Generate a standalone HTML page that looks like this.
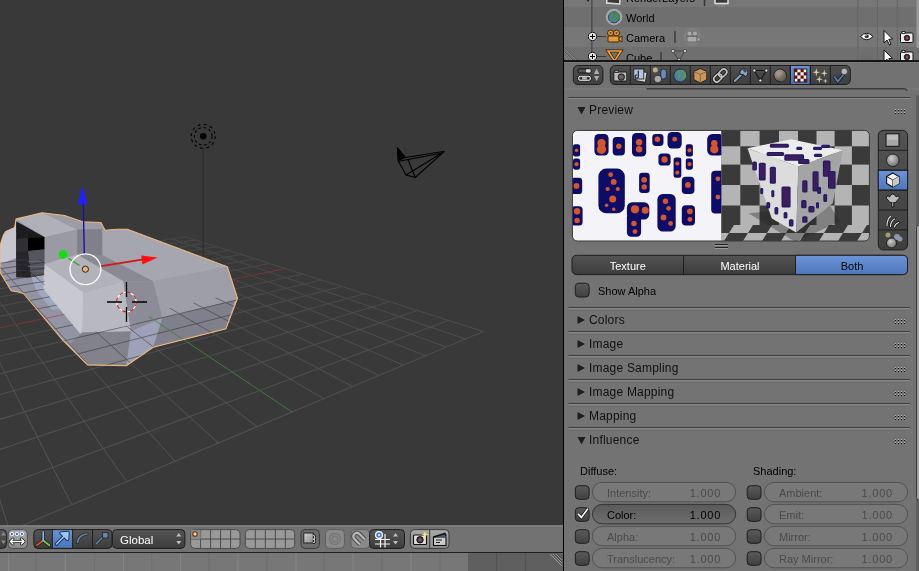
<!DOCTYPE html>
<html><head><meta charset="utf-8">
<style>
*{margin:0;padding:0;box-sizing:border-box}
html,body{width:919px;height:571px;overflow:hidden;background:#393939;font-family:"Liberation Sans",sans-serif;font-size:11px;color:#000}
.abs{position:absolute}
.txt{font-size:11px;line-height:14px;color:#000;white-space:nowrap;will-change:transform}
#vp{left:0;top:0;width:563px;height:525px;background:#393939}
#vhdr{left:0;top:525px;width:563px;height:27px;background:#727272;border-top:1px solid #5a5a5a}

#div{left:563px;top:0;width:1px;height:571px;background:#000}
#outl{left:564px;top:0;width:355px;height:61px;background:#727272}
#phdr{left:564px;top:61px;width:355px;height:28px;background:#727272;border-top:1px solid #000}
#props{left:564px;top:89px;width:355px;height:482px;background:#737373}
</style></head><body>
<div id="vp" class="abs">
<svg width="563" height="525" style="position:absolute;left:0;top:0">
<defs><linearGradient id="gridg" gradientUnits="userSpaceOnUse" x1="0" y1="235" x2="0" y2="420"><stop offset="0" stop-color="#464646"/><stop offset="1" stop-color="#535353"/></linearGradient></defs><path d="M-122.5,280.6L-145.2,596.0M-122.5,280.6L186.1,236.9M-96.3,276.9L-62.1,561.0M-122.9,286.9L195.7,240.0M-71.3,273.3L9.5,530.9M-123.4,293.7L205.9,243.2M-47.4,270.0L71.8,504.7M-124.0,301.3L216.9,246.7M-24.7,266.7L126.6,481.6M-124.6,309.7L228.6,250.5M-2.9,263.7L175.0,461.2M-125.2,319.0L241.2,254.5M18.0,260.7L218.3,443.0M-126.0,329.4L254.8,258.8M37.9,257.9L257.0,426.7M-126.8,341.1L269.4,263.5M75.5,252.6L323.7,398.7M-128.9,369.5L302.5,274.0M93.2,250.1L352.6,386.5M-130.1,386.9L321.3,280.0M110.1,247.7L379.0,375.4M-131.6,407.3L341.9,286.5M126.5,245.4L403.3,365.2M-133.3,431.4L364.6,293.7M142.2,243.1L425.7,355.8M-135.4,460.2L389.6,301.7M157.4,241.0L446.3,347.1M-138.0,495.4L417.4,310.5M172.0,238.9L465.5,339.0M-141.1,539.4L448.4,320.4M186.1,236.9L483.3,331.5M-145.2,596.0L483.3,331.5" stroke="url(#gridg)" stroke-width="1" fill="none"/>
<g stroke-width="1" fill="none"><path d="M-127.8,354.3L285.3,268.5" stroke="#7a3434"/><path d="M57.1,255.2L292.0,412.0" stroke="#3c7c3c"/></g>
<line x1="203.2" y1="148" x2="203.2" y2="256" stroke="#2a2a2a" stroke-width="1"/><circle cx="203.2" cy="136.3" r="3.2" fill="#000"/><circle cx="203.2" cy="136.3" r="8.8" fill="none" stroke="#000" stroke-width="1.1" stroke-dasharray="2.6 2.6"/><circle cx="203.2" cy="136.3" r="12" fill="none" stroke="#000" stroke-width="1.1" stroke-dasharray="3 3.3"/>
<g stroke="#000" stroke-width="1.1" fill="none" stroke-linejoin="round">
<polygon points="397.3,147.3 398,160.5 405.5,157.5" fill="#000" stroke-width="1"/>
<path d="M404,157.8 L444.6,151.2 M399,161.2 L443.5,152.8 M398,160.5 L406,175 L415.2,177.5 L444.6,151.2 M408.2,160 L415.2,177.5 M406,175 L442,153"/>
</g>
<g><polygon points="0.0,245.6 3.5,235.1 5.6,231.6 14.7,227.4 16.1,219.0 42.0,212.7 64.5,215.5 82.7,221.8 100.9,222.5 105.1,230.2 117.5,229.2 127.4,229.2 227.4,266.8 237.5,298.2 225.9,328.9 153.2,347.3 126.4,365.8 87.6,364.9 62.5,340.0 23.8,293.7 19.4,292.2 11.2,290.7 0.0,272.1" fill="#9a9aa6" />
<polygon points="0.0,262.0 16.4,258.0 16.4,277.0 44.5,276.0 43.2,289.2 80.4,334.0 82.0,332.5 70.0,343.6 62.5,340.0 23.8,293.7 19.4,292.2 11.2,290.7 0.0,272.1" fill="#9294a4" />
<polygon points="31.0,276.0 44.5,276.0 43.2,289.2 60.0,309.0 52.0,310.0 36.0,290.0" fill="#a2a8c0" />
<polygon points="0.0,245.6 3.5,235.1 5.6,231.6 14.7,227.4 16.1,219.0 16.4,258.0 0.0,264.0" fill="#c6c6ce" />
<polygon points="16.1,219.0 42.0,212.7 47.4,215.0 77.2,229.4 44.5,237.2" fill="#b0b0b8" />
<polygon points="42.0,212.7 64.5,215.5 82.7,221.8 100.9,222.5 102.5,229.0 77.2,229.4 47.4,215.0" fill="#9c9ca6" />
<polygon points="16.1,221.2 44.9,237.2 44.9,274.5 31.0,277.3 16.4,277.3" fill="#1c1c1f" />
<polygon points="28.0,238.0 44.9,237.2 44.9,249.3 28.0,251.0" fill="#000" />
<polygon points="16.4,239.0 28.0,238.0 28.0,252.0 16.4,252.0" fill="#303034" />
<polygon points="16.4,252.0 28.0,251.0 31.0,277.3 16.4,277.3" fill="#26262a" />
<polygon points="28.0,251.0 44.9,249.3 44.9,274.5 31.0,277.3" fill="#55555d" />
<path d="M28,261.5H44.9M28,266.5H44.9M29,271H44.9" stroke="#6a6a72" stroke-width="0.8"/>
<path d="M16.4,260H28M16.4,265H28.5M16.4,270.5H30" stroke="#3c3c42" stroke-width="0.8"/>
<polygon points="44.5,237.2 77.2,229.4 77.2,254.5 44.5,264.0" fill="#9a9aa4" />
<polygon points="77.2,229.4 102.5,229.0 102.5,255.2 77.2,254.5" fill="#80808c" />
<polygon points="102.5,229.0 105.1,230.2 117.5,229.2 127.4,229.2 227.4,266.8 153.2,281.3 102.5,255.2" fill="#a6a6b0" />
<polygon points="77.2,254.5 102.5,255.2 153.2,281.3 123.4,281.3" fill="#8a8a94" />
<polygon points="44.5,264.0 77.2,254.5 123.4,281.3 83.4,292.2" fill="#b2b2ba" />
<polygon points="44.5,264.0 83.4,292.2 83.4,330.0 80.4,334.0 43.2,289.2" fill="#c8c8d0" />
<polygon points="83.4,292.2 123.4,281.3 131.0,331.6 82.0,332.5" fill="#b8b8c0" />
<polygon points="123.4,281.3 153.2,281.3 162.5,317.7 131.0,331.6" fill="#8c8c98" />
<polygon points="153.2,281.3 227.4,266.8 237.5,298.2 234.6,300.2 162.5,317.7" fill="#9e9ea8" />
<polygon points="82.0,332.5 131.0,331.6 126.4,365.8 87.6,364.9 70.0,343.6" fill="#82828c" />
<polygon points="131.0,331.6 162.5,317.7 153.2,347.3 126.4,365.8" fill="#9ea2b8" />
<polygon points="162.5,317.7 234.6,300.2 225.9,328.9 153.2,347.3" fill="#80808c" /></g>
<clipPath id="mc"><polygon points="0.0,245.6 3.5,235.1 5.6,231.6 14.7,227.4 16.1,219.0 42.0,212.7 64.5,215.5 82.7,221.8 100.9,222.5 105.1,230.2 117.5,229.2 127.4,229.2 227.4,266.8 237.5,298.2 225.9,328.9 153.2,347.3 126.4,365.8 87.6,364.9 62.5,340.0 23.8,293.7 19.4,292.2 11.2,290.7 0.0,272.1"/></clipPath><clipPath id="fc"><polygon points="0.0,258.0 16.4,258.0 16.4,262.0 44.5,258.0 44.5,290.0 80.4,334.0 131.0,325.0 162.5,310.0 240.0,292.0 260.0,292.0 260.0,400.0 0.0,400.0"/></clipPath>
<g clip-path="url(#mc)"><g clip-path="url(#fc)" opacity="0.45"><path d="M-122.5,280.6L-145.2,596.0M-122.5,280.6L186.1,236.9M-96.3,276.9L-62.1,561.0M-122.9,286.9L195.7,240.0M-71.3,273.3L9.5,530.9M-123.4,293.7L205.9,243.2M-47.4,270.0L71.8,504.7M-124.0,301.3L216.9,246.7M-24.7,266.7L126.6,481.6M-124.6,309.7L228.6,250.5M-2.9,263.7L175.0,461.2M-125.2,319.0L241.2,254.5M18.0,260.7L218.3,443.0M-126.0,329.4L254.8,258.8M37.9,257.9L257.0,426.7M-126.8,341.1L269.4,263.5M75.5,252.6L323.7,398.7M-128.9,369.5L302.5,274.0M93.2,250.1L352.6,386.5M-130.1,386.9L321.3,280.0M110.1,247.7L379.0,375.4M-131.6,407.3L341.9,286.5M126.5,245.4L403.3,365.2M-133.3,431.4L364.6,293.7M142.2,243.1L425.7,355.8M-135.4,460.2L389.6,301.7M157.4,241.0L446.3,347.1M-138.0,495.4L417.4,310.5M172.0,238.9L465.5,339.0M-141.1,539.4L448.4,320.4M186.1,236.9L483.3,331.5M-145.2,596.0L483.3,331.5" stroke="#202020" stroke-width="1" fill="none"/><path d="M-127.8,354.3L285.3,268.5" stroke="#b02020" stroke-width="1.2"/><path d="M57.1,255.2L292.0,412.0" stroke="#208020" stroke-width="1.2"/></g></g>
<polygon points="0.0,245.6 3.5,235.1 5.6,231.6 14.7,227.4 16.1,219.0 42.0,212.7 64.5,215.5 82.7,221.8 100.9,222.5 105.1,230.2 117.5,229.2 127.4,229.2 227.4,266.8 237.5,298.2 225.9,328.9 153.2,347.3 126.4,365.8 87.6,364.9 62.5,340.0 23.8,293.7 19.4,292.2 11.2,290.7 0.0,272.1" fill="none" stroke="#f2b878" stroke-width="1.1"/>

<line x1="83.3" y1="203" x2="84.3" y2="254" stroke="#1414a8" stroke-width="1.4"/>
<polygon points="82.4,185.3 77.8,204.5 87.4,204.5" fill="#2020ff"/>
<line x1="99.8" y1="266.4" x2="142" y2="259.7" stroke="#d01818" stroke-width="1.7"/>
<polygon points="157.6,257.4 141.3,255.6 142.3,264.4" fill="#ff1010"/>
<line x1="68.3" y1="258.2" x2="79.5" y2="265.6" stroke="#30a030" stroke-width="1.2"/>
<circle cx="63.1" cy="254.5" r="4.4" fill="#10e010"/>
<circle cx="85.4" cy="269.2" r="15.4" fill="none" stroke="#fff" stroke-width="1.3"/>
<circle cx="85.4" cy="269.2" r="3.1" fill="#f0b070" stroke="#2a2a2a" stroke-width="1"/>


<circle cx="126.5" cy="302" r="9.8" fill="none" stroke="#fff" stroke-width="1.2"/>
<circle cx="126.5" cy="302" r="9.8" fill="none" stroke="#d02020" stroke-width="1.2" stroke-dasharray="4.1 3.6"/>
<path d="M107,302H122M132,302H147M126.5,282V297M126.5,307V322" stroke="#000" stroke-width="1.3"/>

</svg>
</div>

<div class="abs" style="left:0;top:525px;width:563px;height:27px;background:#727272;border-top:2px solid #7c7c7c"></div>
<div class="abs" style="left:0;top:552px;width:563px;height:1px;background:#1e1e1e"></div>
<svg class="abs" style="left:0;top:525px" width="563" height="27">
<defs>
<linearGradient id="gd" x1="0" y1="0" x2="0" y2="1"><stop offset="0" stop-color="#555"/><stop offset="1" stop-color="#3c3c3c"/></linearGradient>
<linearGradient id="gl" x1="0" y1="0" x2="0" y2="1"><stop offset="0" stop-color="#a8a8a8"/><stop offset="1" stop-color="#8e8e8e"/></linearGradient>
<linearGradient id="gb" x1="0" y1="0" x2="0" y2="1"><stop offset="0" stop-color="#6a94d6"/><stop offset="1" stop-color="#4a74b6"/></linearGradient>
</defs>
<!-- partial arrows button -->
<rect x="-6" y="4.6" width="12.5" height="18.8" rx="4" fill="url(#gd)" stroke="#262626"/>
<path d="M1,10.5 L3.5,7 L6,10.5Z M1,15.5 L3.5,19 L6,15.5Z" fill="#8a8a8a"/>
<!-- manipulator toggle -->
<rect x="8.1" y="4.6" width="19.2" height="18.8" rx="4" fill="url(#gl)" stroke="#4a4a4a"/>
<g fill="#4a70c0" stroke="#fff" stroke-width="0.9"><circle cx="11.9" cy="9" r="1.7"/><circle cx="16.9" cy="9" r="1.7"/><circle cx="21.9" cy="9" r="1.7"/></g>
<path d="M10.5,16.5 H24 M13,14 L10.5,16.5 L13,19 M21.5,14 L24,16.5 L21.5,19" stroke="#1a1a1a" stroke-width="3" fill="none" stroke-linecap="round" stroke-linejoin="round"/>
<path d="M10.5,16.5 H24 M13,14 L10.5,16.5 L13,19 M21.5,14 L24,16.5 L21.5,19" stroke="#fff" stroke-width="1.4" fill="none" stroke-linecap="round" stroke-linejoin="round"/>
<!-- transform group -->
<rect x="33.8" y="4.6" width="78.2" height="18.8" rx="4" fill="url(#gd)" stroke="#1e1e1e"/>
<rect x="52.3" y="4.6" width="20.3" height="18.8" fill="url(#gb)" stroke="#1e1e1e"/>
<path d="M92.6,4.6V23.4" stroke="#1e1e1e"/>
<!-- axes icon -->
<path d="M43.2,15.5 L36.9,20.3" stroke="#1a1a1a" stroke-width="3.2" stroke-linecap="round"/>
<path d="M43.2,15.5 L49.4,20.3" stroke="#1a1a1a" stroke-width="3.2" stroke-linecap="round"/>
<path d="M43.2,15.5 V7" stroke="#1a1a1a" stroke-width="3.2" stroke-linecap="round"/>
<path d="M43.2,15.5 L36.9,20.3" stroke="#e05030" stroke-width="1.8" stroke-linecap="round"/>
<path d="M43.2,15.5 L49.4,20.3" stroke="#70d040" stroke-width="1.8" stroke-linecap="round"/>
<path d="M43.2,15.5 V7" stroke="#80b0f0" stroke-width="1.8" stroke-linecap="round"/>
<!-- translate arrow -->
<path d="M56.5,19 L64,11.5 M61,8 L68,7.5 L67.5,14.5Z" stroke="#17305a" stroke-width="3.4" fill="#17305a" stroke-linecap="round" stroke-linejoin="round"/>
<path d="M56.5,19 L64,11.5 M61,8 L68,7.5 L67.5,14.5Z" stroke="#9cc4f4" stroke-width="1.6" fill="#9cc4f4" stroke-linecap="round" stroke-linejoin="round"/>
<!-- rotate arc -->
<path d="M77.5,17.5 Q78.5,10 87,9" stroke="#222" stroke-width="3" fill="none" stroke-linecap="round"/>
<path d="M77.5,17.5 Q78.5,10 87,9" stroke="#6a86b0" stroke-width="1.6" fill="none" stroke-linecap="round"/>
<!-- scale -->
<path d="M96,19 L104,11" stroke="#222" stroke-width="3" stroke-linecap="round"/>
<path d="M96,19 L104,11" stroke="#6a86b0" stroke-width="1.6" stroke-linecap="round"/>
<rect x="102.5" y="7.5" width="5.5" height="5.5" fill="#6a86b0" stroke="#222" stroke-width="0.8"/>
<!-- Global dropdown -->
<rect x="112.5" y="4.6" width="72.4" height="18.8" rx="4" fill="url(#gd)" stroke="#1e1e1e"/>
<path d="M176.3,11.5 L178.8,8 L181.3,11.5Z M176.3,16 L178.8,19.5 L181.3,16Z" fill="#bdbdbd"/>
<!-- layers group 1 -->
<g stroke="#4a4a4a" stroke-width="1">
<rect x="190.6" y="4.6" width="49.4" height="18.8" rx="4" fill="#999"/>
<path d="M190.6,14 H240 M200.6,4.6 V23.4 M210.6,4.6 V23.4 M220.6,4.6 V23.4 M230.6,4.6 V23.4"/>
<rect x="245.3" y="4.6" width="49.4" height="18.8" rx="4" fill="#999"/>
<path d="M245.3,14 H294.7 M255.3,4.6 V23.4 M265.3,4.6 V23.4 M275.3,4.6 V23.4 M285.3,4.6 V23.4"/>
</g>
<rect x="191.2" y="5.2" width="9.4" height="8.8" fill="#8a8a8a" stroke="none"/>
<circle cx="195" cy="9" r="2.3" fill="#e8c8a0" stroke="#6a3a10" stroke-width="1.1"/>
<!-- occlusion btn -->
<rect x="301" y="4.6" width="18.4" height="18.8" rx="4" fill="#6c6c6c" stroke="#3a3a3a"/>
<defs><linearGradient id="occ" x1="0" y1="0" x2="1" y2="1"><stop offset="0" stop-color="#d8d8d8"/><stop offset="1" stop-color="#888"/></linearGradient></defs>
<rect x="303.8" y="8" width="9.5" height="10" fill="url(#occ)" stroke="#222" stroke-width="1"/>
<path d="M313,10.5 a1.8,1.8 0 0,1 0,3.6 a1.8,1.8 0 0,1 0,3.6" stroke="#111" stroke-width="2.6" fill="none"/>
<path d="M313,10.5 a1.8,1.8 0 0,1 0,3.6 a1.8,1.8 0 0,1 0,3.6" stroke="#ddd" stroke-width="1.1" fill="none"/>
<!-- proportional -->
<rect x="325.5" y="4.6" width="18.9" height="18.8" rx="4" fill="#8a8a8a" stroke="#5e5e5e"/>
<circle cx="335" cy="14" r="5.5" fill="none" stroke="#777" stroke-width="1.5"/>
<circle cx="335" cy="14" r="2.8" fill="none" stroke="#777" stroke-width="1.2"/>
<!-- magnet -->
<rect x="351" y="4.6" width="18.6" height="18.8" rx="4" fill="#8a8a8a" stroke="#5e5e5e"/>
<path d="M356,11.5 L362,17.5 A3.6,3.6 0 0,0 367,12.5 L361,6.5" stroke="#4a4a4a" stroke-width="4.2" fill="none" transform="rotate(180 360.5 13)"/>
<path d="M356,11.5 L362,17.5 A3.6,3.6 0 0,0 367,12.5 L361,6.5" stroke="#b8b8b8" stroke-width="2.2" fill="none" transform="rotate(180 360.5 13)"/>
<!-- snap element dropdown -->
<rect x="369.6" y="4.6" width="34.9" height="18.8" rx="4" fill="url(#gd)" stroke="#1e1e1e"/>
<path d="M375,14.5 H390 M375,19 H390 M380.5,9 V22.5 M385,9 V22.5" stroke="#f0f0f0" stroke-width="1.2"/>
<circle cx="379" cy="10" r="3.4" fill="#4a80d0" stroke="#fff" stroke-width="1.2"/>
<circle cx="379" cy="10" r="1" fill="#fff"/>
<path d="M393,11.5 L395.5,8 L398,11.5Z M393,16 L395.5,19.5 L398,16Z" fill="#bdbdbd"/>
<!-- render buttons -->
<rect x="410.4" y="4.6" width="38.6" height="18.8" rx="4" fill="url(#gl)" stroke="#3a3a3a"/>
<path d="M429.7,4.6 V23.4" stroke="#3a3a3a"/>
<rect x="413.5" y="10" width="13" height="9.5" rx="1" fill="#ddd" stroke="#111" stroke-width="1.1"/>
<circle cx="420" cy="14.8" r="3.2" fill="#444" stroke="#111" stroke-width="1"/><circle cx="420" cy="14.8" r="1.3" fill="#b05050"/>
<path d="M425,6.5 L426,9 L428.5,9.5 L426,10.5 L425,13 L424,10.5 L421.5,9.5 L424,9Z" fill="#ffee60"/>
<rect x="433.5" y="12" width="12.5" height="8.5" fill="#ccc" stroke="#111" stroke-width="1.1"/>
<path d="M433.5,12 L445,8.5 L446,11" stroke="#111" stroke-width="1.5" fill="#3a60a0"/>
<path d="M436,15 h6 M436,17.5 h4" stroke="#222" stroke-width="1"/>
<!-- right edge divider -->
</svg>
<div class="abs" style="left:120.4px;top:533px;font-size:11.5px;color:#fff;line-height:14px;will-change:transform">Global</div>


<div class="abs" style="left:0;top:553px;width:468px;height:18px;background:#777"></div>
<div class="abs" style="left:468px;top:553px;width:95px;height:18px;background:#5f5f5f"></div>
<svg class="abs" style="left:0;top:553px" width="563" height="18">
<path d="M8.7,0V18 M65.3,0V18 M123.6,0V18 M180.6,0V18 M238,0V18 M296,0V18 M353,0V18 M411,0V18" stroke="#868686" stroke-width="1"/>
<path d="M35.9,0V18 M94.7,0V18 M151.7,0V18 M209,0V18 M267,0V18 M324,0V18 M382,0V18 M440,0V18" stroke="#6e6e6e"/><path d="M496.7,0V18 M525.7,0V18" stroke="#505050" stroke-width="1"/>
<path d="M553,1 L562,10 M556,1 L562,7 M550,1 L562,13" stroke="#999" stroke-width="1"/>
<path d="M554,1 L562,9 M557,1 L562,6" stroke="#444" stroke-width="1"/>
</svg>

<div id="div" class="abs"></div>

<div class="abs" style="left:564px;top:0;width:355px;height:61px;background:#727272;overflow:hidden">
 <div class="abs" style="left:0;top:-13px;width:355px;height:20px;background:#777"></div>
 <div class="abs" style="left:0;top:7px;width:355px;height:20px;background:#6f6f6f"></div>
 <div class="abs" style="left:0;top:27px;width:355px;height:20px;background:#777"></div>
 <div class="abs" style="left:0;top:47px;width:355px;height:20px;background:#6f6f6f"></div>
 <svg class="abs" style="left:0;top:0" width="355" height="61">
  <path d="M27.9,0 V57" stroke="#3a3a3a" stroke-width="1"/>
  <path d="M28,36.5 H42 M28,56.5 H42" stroke="#3a3a3a" stroke-width="1"/>
  <g fill="#e4e4e4" stroke="#1a1a1a" stroke-width="1"><circle cx="28.5" cy="36.5" r="4.2"/><circle cx="28.5" cy="56.5" r="4.2"/></g>
  <path d="M26,36.5 H31 M28.5,34 V39 M26,56.5 H31 M28.5,54 V59" stroke="#000" stroke-width="1"/>
  <!-- renderlayers row partial -->
  <path d="M22,-1 L26,-1 L24,2Z" fill="#222"/>
  <rect x="43" y="-6" width="13" height="9.5" fill="#3a3a3a" stroke="#ddd" stroke-width="1.5" transform="rotate(4 49 -1)"/>
  <circle cx="157.5" cy="-1" r="8" fill="#8a8a8a" opacity="0.5"/><rect x="151" y="-6" width="13" height="9.5" fill="#3a3a3a" stroke="#ddd" stroke-width="1.5"/>
  <path d="M140.5,-5 V6" stroke="#333" stroke-width="1.5"/>
  <!-- world icon -->
  <circle cx="50" cy="17" r="8.3" fill="#b8c0cc" opacity="0.7"/>
  <circle cx="50" cy="17.3" r="5.6" fill="#4d7fae" stroke="#233" stroke-width="0.8"/>
  <path d="M46,14 q2,-2 4,0 q1,3 -1,4 q-2,2 -2,4 M51,13 q3,1 4,4 q-2,1 -3,3" stroke="#4b8a3c" stroke-width="2" fill="none"/>
  <!-- camera icon -->
  <g stroke="#3a2000" stroke-width="0.9" fill="#e39a3a">
   <circle cx="46.5" cy="33" r="3"/><circle cx="52.5" cy="33" r="3"/>
   <rect x="44" y="36" width="11" height="6" rx="1"/>
   <path d="M55,38 L58,36 V42 L55,40Z"/>
  </g>
  <circle cx="46.5" cy="33" r="1" fill="#6a3a10"/><circle cx="52.5" cy="33" r="1" fill="#6a3a10"/>
  <path d="M111,31 V43" stroke="#333" stroke-width="1.3"/>
  <circle cx="128.5" cy="37" r="9" fill="#8a8a8a" opacity="0.55"/>
  <g stroke="#666" stroke-width="0.9" fill="#aaa"><circle cx="125.5" cy="33.5" r="2.6"/><circle cx="131" cy="33.5" r="2.6"/><rect x="123" y="36.5" width="10" height="5.5"/><path d="M133,38 L136,36.5 V42 L133,40.5Z"/></g>
  <!-- cube (mesh) icon -->
  <path d="M44,51 L57,51 L50.5,61Z" fill="none" stroke="#3a2000" stroke-width="3"/>
  <path d="M44,51 L57,51 L50.5,61Z" fill="none" stroke="#f0a040" stroke-width="1.6"/>
  <path d="M97,52 V62" stroke="#333" stroke-width="1.3"/>
  <path d="M109,51 L121,51 L115,61Z" fill="none" stroke="#444" stroke-width="1"/>
  <g fill="#ddd" stroke="#333" stroke-width="0.7"><circle cx="109" cy="51" r="1.6"/><circle cx="121" cy="51" r="1.6"/><circle cx="115" cy="60" r="1.6"/></g>
  <!-- columns -->
  <path d="M293.8,0 V61 M313.5,0 V61 M333.3,0 V61" stroke="#666" stroke-width="1"/>
  <!-- eye -->
  <path d="M296.5,36.5 Q302.7,30 309,36.5 Q302.7,43 296.5,36.5Z" fill="#fff" stroke="#111" stroke-width="1"/>
  <circle cx="302.7" cy="36.3" r="2" fill="#333"/><circle cx="302" cy="35.6" r="0.7" fill="#eee"/>
  <ellipse cx="302.7" cy="56" rx="6" ry="4.5" fill="#6c6c6c" opacity="0.8"/>
  <!-- cursors -->
  <path d="M320,30.5 V43 L323,40 L325.5,45 L327,44.3 L324.8,39.3 L328.5,39Z" fill="#fff" stroke="#111" stroke-width="1" stroke-linejoin="round"/>
  <path d="M320,50 V62 L323,59.3 L325.5,64 L327,63.3 L324.8,58.6 L328.5,58.3Z" fill="#fff" stroke="#111" stroke-width="1" stroke-linejoin="round"/>
  <!-- render camera -->
  <g><rect x="336.5" y="33" width="12.5" height="9.5" rx="1" fill="#eee" stroke="#111" stroke-width="1"/><rect x="338" y="31.5" width="3" height="2" fill="#eee" stroke="#111" stroke-width="0.8"/><circle cx="343" cy="38" r="2.8" fill="#433" stroke="#111" stroke-width="0.8"/><circle cx="343" cy="38" r="1.2" fill="#a04060"/></g>
  <g><rect x="336.5" y="52" width="12.5" height="9.5" rx="1" fill="#eee" stroke="#111" stroke-width="1"/><rect x="338" y="50.5" width="3" height="2" fill="#eee" stroke="#111" stroke-width="0.8"/><circle cx="343" cy="57" r="2.8" fill="#433" stroke="#111" stroke-width="0.8"/><circle cx="343" cy="57" r="1.2" fill="#a04060"/></g>
  <!-- scrollbar -->
  <rect x="352.5" y="-5" width="3" height="53" rx="1.5" fill="#999"/>
  <!-- resize stripes -->
  <path d="M0,48 L13,61 M0,52 L9,61 M0,56 L5,61" stroke="#888" stroke-width="1"/>
  <path d="M1,48 L14,61 M1,52 L10,61" stroke="#555" stroke-width="0.8"/>
 </svg>
 <div class="abs txt" style="left:61.7px;top:-9px">RenderLayers</div>
 <div class="abs txt" style="left:61.7px;top:11px">World</div>
 <div class="abs txt" style="left:61.7px;top:31px">Camera</div>
 <div class="abs txt" style="left:61.7px;top:51px">Cube</div>
</div>
<div class="abs" style="left:564px;top:60px;width:355px;height:2px;background:#161616"></div>

<div id="props" class="abs"></div>

<div class="abs" style="left:564px;top:62px;width:355px;height:27px;background:#727272"></div>
<svg class="abs" style="left:0;top:0;pointer-events:none" width="919" height="100">
<defs><linearGradient id="hg" x1="0" y1="0" x2="0" y2="1"><stop offset="0" stop-color="#505050"/><stop offset="1" stop-color="#3e3e3e"/></linearGradient>
<linearGradient id="hb" x1="0" y1="0" x2="0" y2="1"><stop offset="0" stop-color="#6a94d6"/><stop offset="1" stop-color="#4a74b6"/></linearGradient></defs>
<rect x="573.3" y="65.5" width="29.6" height="19" rx="4.5" fill="url(#hg)" stroke="#1e1e1e"/>
<rect x="578" y="68.8" width="13" height="4.2" rx="1.5" fill="#555" stroke="#111" stroke-width="1"/><rect x="586" y="69.3" width="4.6" height="3.2" rx="1" fill="#ddd"/>
<rect x="578" y="75.8" width="13" height="5" rx="1.8" fill="#555" stroke="#111" stroke-width="1"/><rect x="578.6" y="76.3" width="11.8" height="4" rx="1.5" fill="none" stroke="#f0f0f0" stroke-width="1"/>
<path d="M580,78.3 L581.6,77 V79.6Z M589,78.3 L587.4,77 V79.6Z" fill="#111"/><rect x="582.2" y="77.2" width="4.6" height="2.2" fill="#bbb"/>
<path d="M594,74 L599.3,74 L596.6,68.6Z M594,75.9 L599.3,75.9 L596.6,81.1Z" fill="#aaa"/>
<rect x="610.3" y="65.5" width="240" height="19" rx="4.5" fill="url(#hg)" stroke="#1e1e1e"/>
<rect x="790.3" y="65.5" width="20" height="19" fill="url(#hb)" stroke="#1e1e1e"/>
<path d="M630.3,65.5V84.5M650.3,65.5V84.5M670.3,65.5V84.5M690.3,65.5V84.5M710.3,65.5V84.5M730.3,65.5V84.5M750.3,65.5V84.5M770.3,65.5V84.5M790.3,65.5V84.5M810.3,65.5V84.5M830.3,65.5V84.5" stroke="#1e1e1e"/>
<g transform="translate(610.3,65.5)"><rect x="3.5" y="6.5" width="13" height="9" rx="1" fill="#bbb" stroke="#1a1a1a" stroke-width="1"/><rect x="4.5" y="4.8" width="3.5" height="2" fill="#bbb" stroke="#1a1a1a" stroke-width="0.8"/><circle cx="11" cy="11.5" r="3.2" fill="#555" stroke="#1a1a1a" stroke-width="0.9"/><circle cx="11" cy="11.5" r="1.3" fill="#a06060"/></g><g transform="translate(630.3,65.5)"><rect x="6" y="6" width="10" height="10" fill="#ddd" stroke="#222" stroke-width="0.9" transform="rotate(10 11 11)"/><rect x="3.5" y="3.5" width="10" height="10" fill="#b8c4d8" stroke="#222" stroke-width="0.9"/><path d="M8,5 v6 a1.6,1.6 0 1,1 -1.5,-1.5" stroke="#234" stroke-width="1.3" fill="none"/></g><g transform="translate(650.3,65.5)"><circle cx="5" cy="4.5" r="2.5" fill="#e8e090" opacity="0.7"/><rect x="10.5" y="3.5" width="5.5" height="10" rx="2.7" fill="#6a8ac0" stroke="#222" stroke-width="0.8"/><circle cx="7.5" cy="13.5" r="3.8" fill="#aaa" stroke="#222" stroke-width="0.8"/></g><g transform="translate(670.3,65.5)"><circle cx="10" cy="10" r="6.5" fill="#4f7eaa" stroke="#1a2a3a" stroke-width="0.9"/><path d="M6,7 q3,-2 4,1 q0,3 -2,4 M11,5 q4,1 4,6 q-2,0 -3,3" stroke="#5a9a4a" stroke-width="2" fill="none"/></g><g transform="translate(690.3,65.5)"><path d="M10,3 L16.5,6 V14 L10,17.5 L3.5,14 V6Z" fill="#c89860" stroke="#2a1a0a" stroke-width="0.9"/><path d="M3.5,6 L10,9 L16.5,6 M10,9 V17.5" stroke="#7a5a30" stroke-width="0.8" fill="none"/></g><g transform="translate(710.3,65.5)"><g transform="rotate(-45 10 10)"><rect x="2" y="7" width="9" height="6" rx="3" fill="none" stroke="#1a1a1a" stroke-width="3.2"/><rect x="9" y="7" width="9" height="6" rx="3" fill="none" stroke="#1a1a1a" stroke-width="3.2"/><rect x="2" y="7" width="9" height="6" rx="3" fill="none" stroke="#c4c4c4" stroke-width="1.6"/><rect x="9" y="7" width="9" height="6" rx="3" fill="none" stroke="#c4c4c4" stroke-width="1.6"/></g></g><g transform="translate(730.3,65.5)"><path d="M4.5,15.5 L11.5,8.5" stroke="#1a1a1a" stroke-width="3.6" stroke-linecap="round"/><path d="M4.5,15.5 L11.5,8.5" stroke="#8aa4c8" stroke-width="2" stroke-linecap="round"/><path d="M10,9 a4,4 0 1,1 5,2 l-2,-2 z" fill="#8aa4c8" stroke="#1a1a1a" stroke-width="0.9"/><path d="M13.2,4 L15.5,6.5" stroke="#404040" stroke-width="2.2"/></g><g transform="translate(750.3,65.5)"><path d="M4,5 L16,5 L10,15Z" fill="none" stroke="#1a1a1a" stroke-width="1.2"/><g fill="#eee" stroke="#111" stroke-width="0.7"><circle cx="4" cy="5" r="1.5"/><circle cx="16" cy="5" r="1.5"/><circle cx="10" cy="15" r="1.5"/></g></g><g transform="translate(770.3,65.5)"><defs><radialGradient id="matg" cx="0.35" cy="0.3" r="0.8"><stop offset="0" stop-color="#c8b0a0"/><stop offset="1" stop-color="#4a3a34"/></radialGradient></defs><circle cx="10" cy="10" r="6.3" fill="url(#matg)" stroke="#1a1a1a" stroke-width="0.9"/><path d="M10,10 L10,3.7 A6.3,6.3 0 0,0 3.7,10Z" fill="#8a8a8a" opacity="0.6"/><path d="M10,10 L16.3,10 A6.3,6.3 0 0,1 10,16.3Z" fill="#6a6a6a" opacity="0.6"/></g><g transform="translate(790.3,65.5)"><rect x="4" y="3.5" width="12.5" height="13" fill="#fff" stroke="#222" stroke-width="1"/><path d="M4,3.5h3.1v3.25h-3.1z M10.25,3.5h3.1v3.25h-3.1z M7.1,6.75h3.1v3.25h-3.1z M13.35,6.75h3.1v3.25h-3.1z M4,10h3.1v3.25h-3.1z M10.25,10h3.1v3.25h-3.1z M7.1,13.25h3.1v3.25h-3.1z M13.35,13.25h3.1v3.25h-3.1z" fill="#6a0a0a"/></g><g transform="translate(810.3,65.5)"><g fill="#d8d0a8"><path d="M6,2.5 L6.8,6 L10,6.8 L6.8,7.6 L6,11 L5.2,7.6 L2,6.8 L5.2,6Z"/><path d="M14,4 L14.7,7 L17.5,7.7 L14.7,8.4 L14,11.5 L13.3,8.4 L10.5,7.7 L13.3,7Z"/><path d="M9,10 L9.7,13 L12.5,13.7 L9.7,14.4 L9,17.5 L8.3,14.4 L5.5,13.7 L8.3,13Z"/><path d="M15,13 L15.5,15 L17.5,15.5 L15.5,16 L15,18 L14.5,16 L12.5,15.5 L14.5,15Z"/></g></g><g transform="translate(830.3,65.5)"><path d="M4,11 l3.5,5 l6.5,-8" stroke="#1a1a1a" stroke-width="3.2" fill="none"/><path d="M4,11 l3.5,5 l6.5,-8" stroke="#5a7ab0" stroke-width="1.8" fill="none"/><circle cx="14" cy="6" r="3.3" fill="#b8b8b8" stroke="#333" stroke-width="0.8"/></g>
<path d="M564.5,89 H919" stroke="#7e7e7e"/><path d="M564,62.5 H919" stroke="#7a7a7a"/>
<path d="M646.4,88.8 H904 q2.5,0 3,2" stroke="#3a3a3a" stroke-width="1.4" fill="none"/>
</svg>


<div class="abs" style="left:564px;top:89px;width:355px;height:482px;overflow:hidden">
<svg class="abs" style="left:0;top:0" width="355" height="482">
<path d="M4.5,8.5 H346.5" stroke="#3e3e3e"/><path d="M4.5,9.5 H346.5" stroke="#8c8c8c"/><path d="M13.5,18.0 L21.5,18.0 L17.5,25.5Z" fill="#1e1e1e"/><rect x="331" y="20" width="1" height="1" fill="#b8b8b8"/><rect x="331" y="21" width="1" height="1" fill="#151515"/><rect x="331" y="23" width="1" height="1" fill="#b8b8b8"/><rect x="331" y="24" width="1" height="1" fill="#151515"/><rect x="334" y="20" width="1" height="1" fill="#b8b8b8"/><rect x="334" y="21" width="1" height="1" fill="#151515"/><rect x="334" y="23" width="1" height="1" fill="#b8b8b8"/><rect x="334" y="24" width="1" height="1" fill="#151515"/><rect x="337" y="20" width="1" height="1" fill="#b8b8b8"/><rect x="337" y="21" width="1" height="1" fill="#151515"/><rect x="337" y="23" width="1" height="1" fill="#b8b8b8"/><rect x="337" y="24" width="1" height="1" fill="#151515"/><rect x="340" y="20" width="1" height="1" fill="#b8b8b8"/><rect x="340" y="21" width="1" height="1" fill="#151515"/><rect x="340" y="23" width="1" height="1" fill="#b8b8b8"/><rect x="340" y="24" width="1" height="1" fill="#151515"/><path d="M4.5,218.5 H346.5" stroke="#3e3e3e"/><path d="M4.5,219.5 H346.5" stroke="#8c8c8c"/><path d="M13.5,227.0 L13.5,235.0 L21,231.0Z" fill="#1e1e1e"/><rect x="331" y="230" width="1" height="1" fill="#b8b8b8"/><rect x="331" y="231" width="1" height="1" fill="#151515"/><rect x="331" y="233" width="1" height="1" fill="#b8b8b8"/><rect x="331" y="234" width="1" height="1" fill="#151515"/><rect x="334" y="230" width="1" height="1" fill="#b8b8b8"/><rect x="334" y="231" width="1" height="1" fill="#151515"/><rect x="334" y="233" width="1" height="1" fill="#b8b8b8"/><rect x="334" y="234" width="1" height="1" fill="#151515"/><rect x="337" y="230" width="1" height="1" fill="#b8b8b8"/><rect x="337" y="231" width="1" height="1" fill="#151515"/><rect x="337" y="233" width="1" height="1" fill="#b8b8b8"/><rect x="337" y="234" width="1" height="1" fill="#151515"/><rect x="340" y="230" width="1" height="1" fill="#b8b8b8"/><rect x="340" y="231" width="1" height="1" fill="#151515"/><rect x="340" y="233" width="1" height="1" fill="#b8b8b8"/><rect x="340" y="234" width="1" height="1" fill="#151515"/><path d="M4.5,242.5 H346.5" stroke="#3e3e3e"/><path d="M4.5,243.5 H346.5" stroke="#8c8c8c"/><path d="M13.5,251.0 L13.5,259.0 L21,255.0Z" fill="#1e1e1e"/><rect x="331" y="254" width="1" height="1" fill="#b8b8b8"/><rect x="331" y="255" width="1" height="1" fill="#151515"/><rect x="331" y="257" width="1" height="1" fill="#b8b8b8"/><rect x="331" y="258" width="1" height="1" fill="#151515"/><rect x="334" y="254" width="1" height="1" fill="#b8b8b8"/><rect x="334" y="255" width="1" height="1" fill="#151515"/><rect x="334" y="257" width="1" height="1" fill="#b8b8b8"/><rect x="334" y="258" width="1" height="1" fill="#151515"/><rect x="337" y="254" width="1" height="1" fill="#b8b8b8"/><rect x="337" y="255" width="1" height="1" fill="#151515"/><rect x="337" y="257" width="1" height="1" fill="#b8b8b8"/><rect x="337" y="258" width="1" height="1" fill="#151515"/><rect x="340" y="254" width="1" height="1" fill="#b8b8b8"/><rect x="340" y="255" width="1" height="1" fill="#151515"/><rect x="340" y="257" width="1" height="1" fill="#b8b8b8"/><rect x="340" y="258" width="1" height="1" fill="#151515"/><path d="M4.5,266.5 H346.5" stroke="#3e3e3e"/><path d="M4.5,267.5 H346.5" stroke="#8c8c8c"/><path d="M13.5,275.0 L13.5,283.0 L21,279.0Z" fill="#1e1e1e"/><rect x="331" y="278" width="1" height="1" fill="#b8b8b8"/><rect x="331" y="279" width="1" height="1" fill="#151515"/><rect x="331" y="281" width="1" height="1" fill="#b8b8b8"/><rect x="331" y="282" width="1" height="1" fill="#151515"/><rect x="334" y="278" width="1" height="1" fill="#b8b8b8"/><rect x="334" y="279" width="1" height="1" fill="#151515"/><rect x="334" y="281" width="1" height="1" fill="#b8b8b8"/><rect x="334" y="282" width="1" height="1" fill="#151515"/><rect x="337" y="278" width="1" height="1" fill="#b8b8b8"/><rect x="337" y="279" width="1" height="1" fill="#151515"/><rect x="337" y="281" width="1" height="1" fill="#b8b8b8"/><rect x="337" y="282" width="1" height="1" fill="#151515"/><rect x="340" y="278" width="1" height="1" fill="#b8b8b8"/><rect x="340" y="279" width="1" height="1" fill="#151515"/><rect x="340" y="281" width="1" height="1" fill="#b8b8b8"/><rect x="340" y="282" width="1" height="1" fill="#151515"/><path d="M4.5,290.5 H346.5" stroke="#3e3e3e"/><path d="M4.5,291.5 H346.5" stroke="#8c8c8c"/><path d="M13.5,299.0 L13.5,307.0 L21,303.0Z" fill="#1e1e1e"/><rect x="331" y="302" width="1" height="1" fill="#b8b8b8"/><rect x="331" y="303" width="1" height="1" fill="#151515"/><rect x="331" y="305" width="1" height="1" fill="#b8b8b8"/><rect x="331" y="306" width="1" height="1" fill="#151515"/><rect x="334" y="302" width="1" height="1" fill="#b8b8b8"/><rect x="334" y="303" width="1" height="1" fill="#151515"/><rect x="334" y="305" width="1" height="1" fill="#b8b8b8"/><rect x="334" y="306" width="1" height="1" fill="#151515"/><rect x="337" y="302" width="1" height="1" fill="#b8b8b8"/><rect x="337" y="303" width="1" height="1" fill="#151515"/><rect x="337" y="305" width="1" height="1" fill="#b8b8b8"/><rect x="337" y="306" width="1" height="1" fill="#151515"/><rect x="340" y="302" width="1" height="1" fill="#b8b8b8"/><rect x="340" y="303" width="1" height="1" fill="#151515"/><rect x="340" y="305" width="1" height="1" fill="#b8b8b8"/><rect x="340" y="306" width="1" height="1" fill="#151515"/><path d="M4.5,314.5 H346.5" stroke="#3e3e3e"/><path d="M4.5,315.5 H346.5" stroke="#8c8c8c"/><path d="M13.5,323.0 L13.5,331.0 L21,327.0Z" fill="#1e1e1e"/><rect x="331" y="326" width="1" height="1" fill="#b8b8b8"/><rect x="331" y="327" width="1" height="1" fill="#151515"/><rect x="331" y="329" width="1" height="1" fill="#b8b8b8"/><rect x="331" y="330" width="1" height="1" fill="#151515"/><rect x="334" y="326" width="1" height="1" fill="#b8b8b8"/><rect x="334" y="327" width="1" height="1" fill="#151515"/><rect x="334" y="329" width="1" height="1" fill="#b8b8b8"/><rect x="334" y="330" width="1" height="1" fill="#151515"/><rect x="337" y="326" width="1" height="1" fill="#b8b8b8"/><rect x="337" y="327" width="1" height="1" fill="#151515"/><rect x="337" y="329" width="1" height="1" fill="#b8b8b8"/><rect x="337" y="330" width="1" height="1" fill="#151515"/><rect x="340" y="326" width="1" height="1" fill="#b8b8b8"/><rect x="340" y="327" width="1" height="1" fill="#151515"/><rect x="340" y="329" width="1" height="1" fill="#b8b8b8"/><rect x="340" y="330" width="1" height="1" fill="#151515"/><path d="M4.5,338.5 H346.5" stroke="#3e3e3e"/><path d="M4.5,339.5 H346.5" stroke="#8c8c8c"/><path d="M13.5,348.0 L21.5,348.0 L17.5,355.5Z" fill="#1e1e1e"/><rect x="331" y="350" width="1" height="1" fill="#b8b8b8"/><rect x="331" y="351" width="1" height="1" fill="#151515"/><rect x="331" y="353" width="1" height="1" fill="#b8b8b8"/><rect x="331" y="354" width="1" height="1" fill="#151515"/><rect x="334" y="350" width="1" height="1" fill="#b8b8b8"/><rect x="334" y="351" width="1" height="1" fill="#151515"/><rect x="334" y="353" width="1" height="1" fill="#b8b8b8"/><rect x="334" y="354" width="1" height="1" fill="#151515"/><rect x="337" y="350" width="1" height="1" fill="#b8b8b8"/><rect x="337" y="351" width="1" height="1" fill="#151515"/><rect x="337" y="353" width="1" height="1" fill="#b8b8b8"/><rect x="337" y="354" width="1" height="1" fill="#151515"/><rect x="340" y="350" width="1" height="1" fill="#b8b8b8"/><rect x="340" y="351" width="1" height="1" fill="#151515"/><rect x="340" y="353" width="1" height="1" fill="#b8b8b8"/><rect x="340" y="354" width="1" height="1" fill="#151515"/>
</svg>
<div class="abs txt" style="left:25.299999999999955px;top:14.0px;color:#111;font-size:12px;letter-spacing:0.2px">Preview</div><div class="abs txt" style="left:25.299999999999955px;top:224.0px;color:#111;font-size:12px;letter-spacing:0.2px">Colors</div><div class="abs txt" style="left:25.299999999999955px;top:248.0px;color:#111;font-size:12px;letter-spacing:0.2px">Image</div><div class="abs txt" style="left:25.299999999999955px;top:272.0px;color:#111;font-size:12px;letter-spacing:0.2px">Image Sampling</div><div class="abs txt" style="left:25.299999999999955px;top:296.0px;color:#111;font-size:12px;letter-spacing:0.2px">Image Mapping</div><div class="abs txt" style="left:25.299999999999955px;top:320.0px;color:#111;font-size:12px;letter-spacing:0.2px">Mapping</div><div class="abs txt" style="left:25.299999999999955px;top:344.0px;color:#111;font-size:12px;letter-spacing:0.2px">Influence</div>
</div>
<svg class="abs" style="left:0;top:0" width="919" height="571">
<defs><clipPath id="pvc"><rect x="572.4" y="130.4" width="297" height="110.6" rx="5"/></clipPath></defs>
<filter id="bl" x="-5%" y="-5%" width="110%" height="110%"><feGaussianBlur stdDeviation="0.7"/></filter>
<clipPath id="rhc"><rect x="721.4" y="130" width="150" height="112"/></clipPath>
<g clip-path="url(#pvc)"><g filter="url(#bl)"><rect x="572.4" y="130.4" width="149" height="110.6" fill="#f4f4f8"/><rect x="594.4" y="134.1" width="14.2" height="21.3" rx="4.3" fill="#100c68"/><rect x="612.7" y="137.1" width="12.2" height="18.3" rx="3.7" fill="#100c68"/><rect x="632.0" y="133.1" width="14.2" height="23.4" rx="4.3" fill="#100c68"/><rect x="652.3" y="134.1" width="11.2" height="11.8" rx="3.4" fill="#100c68"/><rect x="667.5" y="132.1" width="14.2" height="16.3" rx="4.3" fill="#100c68"/><rect x="707.2" y="134.1" width="17.3" height="21.3" rx="5.2" fill="#100c68"/><rect x="573.0" y="144.3" width="7.1" height="12.2" rx="2.1" fill="#100c68"/><rect x="573.0" y="158.5" width="7.1" height="11.2" rx="2.1" fill="#100c68"/><rect x="658.4" y="153.4" width="12.2" height="12.2" rx="3.7" fill="#100c68"/><rect x="673.6" y="157.5" width="7.7" height="20.3" rx="2.3" fill="#100c68"/><rect x="685.8" y="144.3" width="7.1" height="12.2" rx="2.1" fill="#100c68"/><rect x="685.8" y="158.5" width="7.1" height="11.2" rx="2.1" fill="#100c68"/><rect x="598.4" y="168.6" width="26.4" height="44.7" rx="7.9" fill="#100c68"/><rect x="639.1" y="172.7" width="10.6" height="20.3" rx="3.2" fill="#100c68"/><rect x="571.0" y="177.8" width="11.2" height="16.3" rx="3.4" fill="#100c68"/><rect x="681.8" y="176.8" width="12.6" height="17.3" rx="3.8" fill="#100c68"/><rect x="711.2" y="170.7" width="13.2" height="42.7" rx="4.0" fill="#100c68"/><rect x="626.9" y="202.2" width="22.4" height="17.3" rx="5.2" fill="#100c68"/><rect x="626.9" y="213.3" width="14.2" height="23.4" rx="4.3" fill="#100c68"/><rect x="657.4" y="194.0" width="18.3" height="37.6" rx="5.5" fill="#100c68"/><rect x="571.0" y="206.2" width="11.6" height="19.3" rx="3.5" fill="#100c68"/><rect x="681.8" y="205.2" width="13.2" height="20.3" rx="4.0" fill="#100c68"/><circle cx="601.5" cy="143.2" r="4.1" fill="#d4562c"/><circle cx="601.5" cy="149.3" r="4.7" fill="#d4562c"/><circle cx="618.8" cy="146.3" r="2.7" fill="#d4562c"/><circle cx="639.1" cy="142.2" r="3.2" fill="#d4562c"/><circle cx="639.1" cy="149.3" r="3.2" fill="#d4562c"/><circle cx="657.4" cy="139.2" r="2.7" fill="#d4562c"/><circle cx="674.7" cy="139.2" r="2.4" fill="#d4562c"/><circle cx="714.3" cy="143.2" r="3.2" fill="#d4562c"/><circle cx="714.3" cy="149.3" r="4.1" fill="#d4562c"/><circle cx="576.5" cy="150.4" r="1.8" fill="#d4562c"/><circle cx="576.5" cy="164.2" r="2.1" fill="#d4562c"/><circle cx="664.5" cy="159.5" r="3.2" fill="#d4562c"/><circle cx="677.3" cy="163.6" r="2.1" fill="#d4562c"/><circle cx="677.3" cy="172.7" r="2.1" fill="#d4562c"/><circle cx="689.5" cy="150.4" r="2.1" fill="#d4562c"/><circle cx="689.5" cy="164.2" r="2.1" fill="#d4562c"/><circle cx="610.6" cy="174.7" r="2.4" fill="#d4562c"/><circle cx="613.7" cy="181.9" r="2.9" fill="#d4562c"/><circle cx="607.6" cy="189.0" r="2.1" fill="#d4562c"/><circle cx="617.8" cy="189.0" r="2.1" fill="#d4562c"/><circle cx="612.7" cy="199.1" r="3.5" fill="#d4562c"/><circle cx="606.6" cy="205.2" r="1.8" fill="#d4562c"/><circle cx="613.7" cy="209.3" r="1.8" fill="#d4562c"/><circle cx="644.2" cy="179.8" r="2.9" fill="#d4562c"/><circle cx="644.2" cy="186.9" r="2.7" fill="#d4562c"/><circle cx="576.5" cy="185.9" r="2.9" fill="#d4562c"/><circle cx="687.9" cy="184.9" r="2.9" fill="#d4562c"/><circle cx="717.9" cy="178.8" r="2.4" fill="#d4562c"/><circle cx="717.9" cy="197.1" r="2.4" fill="#d4562c"/><circle cx="635.0" cy="209.3" r="4.1" fill="#d4562c"/><circle cx="645.2" cy="210.3" r="3.5" fill="#d4562c"/><circle cx="634.0" cy="223.5" r="2.7" fill="#d4562c"/><circle cx="635.0" cy="231.6" r="2.4" fill="#d4562c"/><circle cx="665.5" cy="201.2" r="2.7" fill="#d4562c"/><circle cx="668.6" cy="208.3" r="2.4" fill="#d4562c"/><circle cx="663.5" cy="217.4" r="2.9" fill="#d4562c"/><circle cx="670.6" cy="223.5" r="2.4" fill="#d4562c"/><circle cx="577.1" cy="211.3" r="3.2" fill="#d4562c"/><circle cx="577.1" cy="220.5" r="2.7" fill="#d4562c"/><circle cx="689.9" cy="211.3" r="2.9" fill="#d4562c"/><circle cx="689.9" cy="219.4" r="2.4" fill="#d4562c"/></g><g clip-path="url(#rhc)"><rect x="721" y="130.4" width="149" height="111" fill="#b4b4b4"/><rect x="721.0" y="130.4" width="19.3" height="15.9" fill="#3a3a3a"/><rect x="721.0" y="164.6" width="19.3" height="20.4" fill="#3a3a3a"/><rect x="721.0" y="205.5" width="19.3" height="19.5" fill="#3a3a3a"/><rect x="740.3" y="146.3" width="19.3" height="18.3" fill="#3a3a3a"/><rect x="740.3" y="185.0" width="19.3" height="20.5" fill="#3a3a3a"/><rect x="759.6" y="130.4" width="19.4" height="15.9" fill="#3a3a3a"/><rect x="759.6" y="164.6" width="19.4" height="20.4" fill="#3a3a3a"/><rect x="759.6" y="205.5" width="19.4" height="19.5" fill="#3a3a3a"/><rect x="779.0" y="146.3" width="19.0" height="18.3" fill="#3a3a3a"/><rect x="779.0" y="185.0" width="19.0" height="20.5" fill="#3a3a3a"/><rect x="798.0" y="130.4" width="18.5" height="15.9" fill="#3a3a3a"/><rect x="798.0" y="164.6" width="18.5" height="20.4" fill="#3a3a3a"/><rect x="798.0" y="205.5" width="18.5" height="19.5" fill="#3a3a3a"/><rect x="816.5" y="146.3" width="18.1" height="18.3" fill="#3a3a3a"/><rect x="816.5" y="185.0" width="18.1" height="20.5" fill="#3a3a3a"/><rect x="834.6" y="130.4" width="17.3" height="15.9" fill="#3a3a3a"/><rect x="834.6" y="164.6" width="17.3" height="20.4" fill="#3a3a3a"/><rect x="834.6" y="205.5" width="17.3" height="19.5" fill="#3a3a3a"/><rect x="851.9" y="146.3" width="18.1" height="18.3" fill="#3a3a3a"/><rect x="851.9" y="185.0" width="18.1" height="20.5" fill="#3a3a3a"/><path d="M715,225 L734,225 L729,233 L710,233ZM729,233 L748,233 L743,241 L724,241ZM753,225 L772,225 L767,233 L748,233ZM767,233 L786,233 L781,241 L762,241ZM791,225 L810,225 L805,233 L786,233ZM805,233 L824,233 L819,241 L800,241ZM829,225 L848,225 L843,233 L824,233ZM843,233 L862,233 L857,241 L838,241ZM867,225 L886,225 L881,233 L862,233Z" fill="#3a3a3a"/><polygon points="748.5,213.3 795.2,241.8 839.9,221.5 829.7,205.2" fill="#222" opacity="0.35"/><polygon points="747.5,148.3 791.1,139.2 842.9,150.3 798.3,166.6" fill="#ececec"/><polygon points="747.5,148.3 798.3,166.6 796.2,232.6 771.8,218.4" fill="#dcdcdc"/><polygon points="798.3,166.6 842.9,150.3 832.8,203.2 796.2,232.6" fill="#a4a4a4"/><rect x="769.9" y="143.7" width="19.0" height="4.1" rx="1.5" fill="#1e1a66"/><rect x="770.9" y="144.7" width="17.0" height="2.1" rx="1" fill="#4a2058" opacity="0.7"/><rect x="766.6" y="151.9" width="17.5" height="4.1" rx="1.5" fill="#1e1a66"/><rect x="767.6" y="152.9" width="15.5" height="2.1" rx="1" fill="#4a2058" opacity="0.7"/><rect x="784.3" y="154.2" width="19.8" height="6.5" rx="1.5" fill="#1e1a66"/><rect x="785.3" y="155.2" width="17.8" height="4.5" rx="1" fill="#4a2058" opacity="0.7"/><rect x="798.1" y="159.1" width="11.4" height="4.9" rx="1.5" fill="#1e1a66"/><rect x="799.1" y="160.1" width="9.4" height="2.9" rx="1" fill="#4a2058" opacity="0.7"/><rect x="796.2" y="146.7" width="6.1" height="3.3" rx="1.5" fill="#1e1a66"/><rect x="797.2" y="147.7" width="4.1" height="1.3" rx="1" fill="#4a2058" opacity="0.7"/><rect x="813.0" y="146.7" width="9.1" height="3.3" rx="1.5" fill="#1e1a66"/><rect x="814.0" y="147.7" width="7.1" height="1.3" rx="1" fill="#4a2058" opacity="0.7"/><rect x="813.9" y="153.8" width="8.4" height="3.3" rx="1.5" fill="#1e1a66"/><rect x="814.9" y="154.8" width="6.4" height="1.3" rx="1" fill="#4a2058" opacity="0.7"/><rect x="821.1" y="144.7" width="9.1" height="3.3" rx="1.5" fill="#1e1a66"/><rect x="822.1" y="145.7" width="7.1" height="1.3" rx="1" fill="#4a2058" opacity="0.7"/><rect x="752.3" y="161.6" width="4.6" height="8.9" rx="1.5" fill="#1e1a66"/><rect x="753.3" y="162.6" width="2.6" height="6.9" rx="1" fill="#4a2058" opacity="0.7"/><rect x="758.8" y="162.7" width="6.9" height="17.9" rx="1.5" fill="#1e1a66"/><rect x="759.8" y="163.7" width="4.9" height="15.9" rx="1" fill="#4a2058" opacity="0.7"/><rect x="769.8" y="166.7" width="6.1" height="17.1" rx="1.5" fill="#1e1a66"/><rect x="770.8" y="167.7" width="4.1" height="15.1" rx="1" fill="#4a2058" opacity="0.7"/><rect x="760.2" y="187.7" width="3.0" height="6.5" rx="1.5" fill="#1e1a66"/><rect x="761.2" y="188.7" width="1.0" height="4.5" rx="1" fill="#4a2058" opacity="0.7"/><rect x="771.3" y="189.9" width="3.0" height="7.3" rx="1.5" fill="#1e1a66"/><rect x="772.3" y="190.9" width="1.0" height="5.3" rx="1" fill="#4a2058" opacity="0.7"/><rect x="781.5" y="186.5" width="9.1" height="21.1" rx="1.5" fill="#1e1a66"/><rect x="782.5" y="187.5" width="7.1" height="19.1" rx="1" fill="#4a2058" opacity="0.7"/><rect x="766.4" y="202.0" width="3.8" height="6.5" rx="1.5" fill="#1e1a66"/><rect x="767.4" y="203.0" width="1.8" height="4.5" rx="1" fill="#4a2058" opacity="0.7"/><rect x="774.5" y="207.1" width="3.8" height="7.3" rx="1.5" fill="#1e1a66"/><rect x="775.5" y="208.1" width="1.8" height="5.3" rx="1" fill="#4a2058" opacity="0.7"/><rect x="783.6" y="212.1" width="3.8" height="6.5" rx="1.5" fill="#1e1a66"/><rect x="784.6" y="213.1" width="1.8" height="4.5" rx="1" fill="#4a2058" opacity="0.7"/><rect x="788.9" y="219.3" width="4.6" height="7.3" rx="1.5" fill="#1e1a66"/><rect x="789.9" y="220.3" width="2.6" height="5.3" rx="1" fill="#4a2058" opacity="0.7"/><rect x="802.2" y="180.3" width="5.3" height="12.2" rx="1.5" fill="#1e1a66"/><rect x="803.2" y="181.3" width="3.3" height="10.2" rx="1" fill="#4a2058" opacity="0.7"/><rect x="812.5" y="171.2" width="6.1" height="20.3" rx="1.5" fill="#1e1a66"/><rect x="813.5" y="172.2" width="4.1" height="18.3" rx="1" fill="#4a2058" opacity="0.7"/><rect x="822.9" y="160.5" width="7.6" height="16.3" rx="1.5" fill="#1e1a66"/><rect x="823.9" y="161.5" width="5.6" height="14.3" rx="1" fill="#4a2058" opacity="0.7"/><rect x="828.0" y="170.9" width="7.6" height="17.9" rx="1.5" fill="#1e1a66"/><rect x="829.0" y="171.9" width="5.6" height="15.9" rx="1" fill="#4a2058" opacity="0.7"/><rect x="817.2" y="186.8" width="3.8" height="7.3" rx="1.5" fill="#1e1a66"/><rect x="818.2" y="187.8" width="1.8" height="5.3" rx="1" fill="#4a2058" opacity="0.7"/><rect x="801.2" y="200.1" width="5.3" height="8.1" rx="1.5" fill="#1e1a66"/><rect x="802.2" y="201.1" width="3.3" height="6.1" rx="1" fill="#4a2058" opacity="0.7"/><rect x="808.4" y="206.0" width="6.1" height="6.5" rx="1.5" fill="#1e1a66"/><rect x="809.4" y="207.0" width="4.1" height="4.5" rx="1" fill="#4a2058" opacity="0.7"/><rect x="816.0" y="202.0" width="3.0" height="6.5" rx="1.5" fill="#1e1a66"/><rect x="817.0" y="203.0" width="1.0" height="4.5" rx="1" fill="#4a2058" opacity="0.7"/><rect x="823.3" y="194.0" width="3.8" height="8.1" rx="1.5" fill="#1e1a66"/><rect x="824.3" y="195.0" width="1.8" height="6.1" rx="1" fill="#4a2058" opacity="0.7"/><rect x="802.2" y="216.2" width="5.3" height="6.5" rx="1.5" fill="#1e1a66"/><rect x="803.2" y="217.2" width="3.3" height="4.5" rx="1" fill="#4a2058" opacity="0.7"/></g></g>
<rect x="572.4" y="130.4" width="297" height="110.6" rx="5" fill="none" stroke="#3a3a3a" stroke-width="1"/>
</svg>
<svg class="abs" style="left:0;top:0" width="919" height="571"><defs>
<linearGradient id="pg" x1="0" y1="0" x2="0" y2="1"><stop offset="0" stop-color="#535353"/><stop offset="1" stop-color="#3f3f3f"/></linearGradient>
<linearGradient id="pg2" x1="0" y1="0" x2="0" y2="1"><stop offset="0" stop-color="#545454"/><stop offset="1" stop-color="#3c3c3c"/></linearGradient>
<linearGradient id="pb" x1="0" y1="0" x2="0" y2="1"><stop offset="0" stop-color="#6b95d8"/><stop offset="1" stop-color="#4d77ba"/></linearGradient>
<linearGradient id="cg" x1="0" y1="0" x2="0" y2="1"><stop offset="0" stop-color="#5a5a5a"/><stop offset="1" stop-color="#404040"/></linearGradient>
<linearGradient id="sg" x1="0" y1="0" x2="0" y2="1"><stop offset="0" stop-color="#5a5a5a"/><stop offset="1" stop-color="#6e6e6e"/></linearGradient>
</defs><rect x="878.3" y="130.4" width="29.3" height="119.5" rx="5" fill="url(#pg)" stroke="#1e1e1e"/><rect x="878.3" y="170.3" width="29.3" height="19.9" fill="url(#pb)" stroke="#1e1e1e"/><path d="M878.3,150.3H907.6M878.3,170.2H907.6M878.3,190.1H907.6M878.3,210.0H907.6M878.3,229.9H907.6" stroke="#1e1e1e"/><rect x="886" y="133.8" width="13" height="12.5" fill="#a8a8a8" stroke="#111" stroke-width="1"/><rect x="887" y="134.8" width="11" height="5" fill="#bbb"/><defs><radialGradient id="sph" cx="0.4" cy="0.35" r="0.7"><stop offset="0" stop-color="#cfcfcf"/><stop offset="1" stop-color="#6a6a6a"/></radialGradient></defs><circle cx="892.8" cy="160.3" r="6.3" fill="url(#sph)" stroke="#1a1a1a" stroke-width="0.9"/><path d="M892.8,173 L899,176.5 V183.5 L892.8,187 L886.6,183.5 V176.5Z" fill="#f2f2f2" stroke="#111" stroke-width="1.1"/><path d="M886.6,176.5 L892.8,180 L899,176.5 M892.8,180 V187" stroke="#111" stroke-width="0.9" fill="none"/><path d="M892.8,180 L899,176.5 V183.5 L892.8,187Z" fill="#c8c8c8"/><path d="M887,196 q-2,2 1,4 q1,3 4.8,3 q3.8,0 4.8,-3 q3,-2 1,-4 q-2,-0 -2.5,1 q-1,-3 -3.3,-3 q-2.3,0 -3.3,3 q-0.5,-1 -2.5,-1Z" fill="#bbb" stroke="#111" stroke-width="0.9"/><path d="M891.8,203 v4 h2 v-4" fill="#bbb" stroke="#111" stroke-width="0.9"/><path d="M887,226 q0,-7 4,-10 M890.5,226.5 q0,-5 4,-7.5 M894.5,227 q0.5,-3 4,-4.5" stroke="#111" stroke-width="2.6" fill="none" stroke-linecap="round"/><path d="M887,226 q0,-7 4,-10 M890.5,226.5 q0,-5 4,-7.5 M894.5,227 q0.5,-3 4,-4.5" stroke="#ddd" stroke-width="1.2" fill="none" stroke-linecap="round"/><circle cx="888" cy="235" r="2.5" fill="#c8c880" opacity="0.7"/><circle cx="897" cy="237" r="3" fill="#8a9aaa"/><circle cx="900" cy="239" r="2.5" fill="#8a9aaa"/><circle cx="891.5" cy="243" r="5" fill="url(#sph)" stroke="#1a1a1a" stroke-width="0.9"/><path d="M715,244.5 H728 M715,247.5 H728" stroke="#222" stroke-width="1"/><path d="M715,245.5 H728 M715,248.5 H728" stroke="#999" stroke-width="1"/><rect x="572" y="255.3" width="335.5" height="19.3" rx="4.5" fill="url(#pg2)" stroke="#1e1e1e"/><path d="M795.5,255.3 H903 a4.5,4.5 0 0,1 4.5,4.5 V270.1 a4.5,4.5 0 0,1 -4.5,4.5 H795.5Z" fill="url(#pb)" stroke="#1e1e1e"/><path d="M683.5,255.3 V274.6" stroke="#1e1e1e"/><rect x="575.3" y="283.2" width="13.8" height="13.8" rx="3.5" fill="url(#cg)" stroke="#1e1e1e"/><rect x="575.3" y="485.7" width="13.8" height="13.6" rx="3.5" fill="url(#cg)" stroke="#1e1e1e"/><rect x="592.4" y="482.4" width="143.3" height="19.4" rx="9.7" fill="#787878" stroke="#525252"/><rect x="747.2" y="485.7" width="13.8" height="13.6" rx="3.5" fill="url(#cg)" stroke="#1e1e1e"/><rect x="764.4" y="482.4" width="143.2" height="19.4" rx="9.7" fill="#787878" stroke="#525252"/><rect x="575.3" y="507.7" width="13.8" height="13.6" rx="3.5" fill="url(#cg)" stroke="#1e1e1e"/><path d="M578.0999999999999,513.9 L581.3,517.4 L587.8,508.7" stroke="#111" stroke-width="3" fill="none"/><path d="M578.0999999999999,513.9 L581.3,517.4 L587.8,508.7" stroke="#fff" stroke-width="1.6" fill="none"/><rect x="592.4" y="504.4" width="143.3" height="19.4" rx="9.7" fill="url(#sg)" stroke="#333"/><rect x="747.2" y="507.7" width="13.8" height="13.6" rx="3.5" fill="url(#cg)" stroke="#1e1e1e"/><rect x="764.4" y="504.4" width="143.2" height="19.4" rx="9.7" fill="#787878" stroke="#525252"/><rect x="575.3" y="529.7" width="13.8" height="13.6" rx="3.5" fill="url(#cg)" stroke="#1e1e1e"/><rect x="592.4" y="526.4" width="143.3" height="19.4" rx="9.7" fill="#787878" stroke="#525252"/><rect x="747.2" y="529.7" width="13.8" height="13.6" rx="3.5" fill="url(#cg)" stroke="#1e1e1e"/><rect x="764.4" y="526.4" width="143.2" height="19.4" rx="9.7" fill="#787878" stroke="#525252"/><rect x="575.3" y="551.7" width="13.8" height="13.6" rx="3.5" fill="url(#cg)" stroke="#1e1e1e"/><rect x="592.4" y="548.4" width="143.3" height="19.4" rx="9.7" fill="#787878" stroke="#525252"/><rect x="747.2" y="551.7" width="13.8" height="13.6" rx="3.5" fill="url(#cg)" stroke="#1e1e1e"/><rect x="764.4" y="548.4" width="143.2" height="19.4" rx="9.7" fill="#787878" stroke="#525252"/><rect x="916" y="94.5" width="6" height="481" rx="3" fill="#5e5e5e"/><rect x="916.5" y="225" width="5" height="275" rx="2.5" fill="#a2a2a2" stroke="#3a3a3a" stroke-width="1"/></svg><div class="abs txt" style="left:572px;width:111.5px;top:259px;text-align:center;color:#fff">Texture</div><div class="abs txt" style="left:683.5px;width:112px;top:259px;text-align:center;color:#fff">Material</div><div class="abs txt" style="left:795.5px;width:112px;top:259px;text-align:center;color:#000">Both</div><div class="abs txt" style="left:597.5px;top:284px">Show Alpha</div><div class="abs txt" style="left:580.2px;top:463.5px">Diffuse:</div><div class="abs txt" style="left:752.6px;top:463.5px">Shading:</div><div class="abs txt" style="left:607.4px;top:486.4px;color:#4a4a4a">Intensity:</div><div class="abs txt" style="left:592.4px;width:129.0px;top:486.4px;color:#4a4a4a;text-align:right;letter-spacing:0.75px">1.000</div><div class="abs txt" style="left:779.4px;top:486.4px;color:#4a4a4a">Ambient:</div><div class="abs txt" style="left:764.4px;width:128.9px;top:486.4px;color:#4a4a4a;text-align:right;letter-spacing:0.75px">1.000</div><div class="abs txt" style="left:607.4px;top:508.4px;color:#000">Color:</div><div class="abs txt" style="left:592.4px;width:129.0px;top:508.4px;color:#000;text-align:right;letter-spacing:0.75px">1.000</div><div class="abs txt" style="left:779.4px;top:508.4px;color:#4a4a4a">Emit:</div><div class="abs txt" style="left:764.4px;width:128.9px;top:508.4px;color:#4a4a4a;text-align:right;letter-spacing:0.75px">1.000</div><div class="abs txt" style="left:607.4px;top:530.4px;color:#4a4a4a">Alpha:</div><div class="abs txt" style="left:592.4px;width:129.0px;top:530.4px;color:#4a4a4a;text-align:right;letter-spacing:0.75px">1.000</div><div class="abs txt" style="left:779.4px;top:530.4px;color:#4a4a4a">Mirror:</div><div class="abs txt" style="left:764.4px;width:128.9px;top:530.4px;color:#4a4a4a;text-align:right;letter-spacing:0.75px">1.000</div><div class="abs txt" style="left:607.4px;top:552.4px;color:#4a4a4a">Translucency:</div><div class="abs txt" style="left:592.4px;width:129.0px;top:552.4px;color:#4a4a4a;text-align:right;letter-spacing:0.75px">1.000</div><div class="abs txt" style="left:779.4px;top:552.4px;color:#4a4a4a">Ray Mirror:</div><div class="abs txt" style="left:764.4px;width:128.9px;top:552.4px;color:#4a4a4a;text-align:right;letter-spacing:0.75px">1.000</div>

</body></html>
